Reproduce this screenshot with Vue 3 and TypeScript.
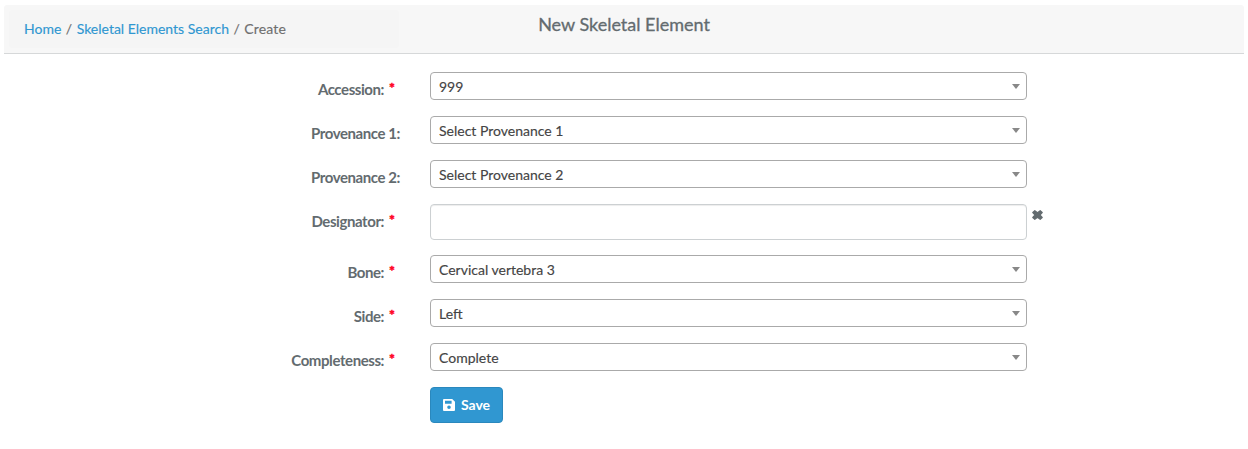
<script setup lang="ts">
import { ref } from 'vue'

interface Field {
  label: string
  value: string
  required: boolean
  kind: 'select' | 'text'
}

const fields = ref<Field[]>([
  { label: 'Accession:', value: '999', required: true, kind: 'select' },
  { label: 'Provenance 1:', value: 'Select Provenance 1', required: false, kind: 'select' },
  { label: 'Provenance 2:', value: 'Select Provenance 2', required: false, kind: 'select' },
  { label: 'Designator:', value: '', required: true, kind: 'text' },
  { label: 'Bone:', value: 'Cervical vertebra 3', required: true, kind: 'select' },
  { label: 'Side:', value: 'Left', required: true, kind: 'select' },
  { label: 'Completeness:', value: 'Complete', required: true, kind: 'select' },
])
</script>

<template>
  <main class="panel">
    <header class="heading">
      <nav class="crumbs">
        <a>Home</a><span class="sep">/</span><a>Skeletal Elements Search</a><span class="sep">/</span><span>Create</span>
      </nav>
      <h1 class="title">New Skeletal Element</h1>
    </header>
    <form class="form" @submit.prevent>
      <div v-for="f in fields" :key="f.label" class="row" :class="`row-${f.kind}`">
        <label class="label">
          <span>{{ f.label }}</span><span v-if="f.required" class="star">*</span>
        </label>
        <div v-if="f.kind === 'select'" class="select">
          <span>{{ f.value }}</span>
          <svg class="caret" width="8" height="5" viewBox="0 0 8 5"><path d="M0 0h8L4 5z" fill="#888" /></svg>
        </div>
        <template v-else>
          <input v-model="f.value" class="input" type="text" />
          <svg class="clear" width="11" height="10" viewBox="0 0 11 10">
            <path fill="#636b6f" stroke="#636b6f" stroke-width="1.2" stroke-linejoin="round" d="M2.8 .7 5.5 2.8 8.2 .7 10.2 2.5 7.9 5 10.2 7.5 8.2 9.3 5.5 7.2 2.8 9.3 .8 7.5 3.1 5 .8 2.5z" />
          </svg>
        </template>
      </div>
      <button class="save" type="submit">
        <svg width="12" height="12" viewBox="0 0 12 12">
          <path fill="#fff" fill-rule="evenodd" d="M1 0H9.2L12 2.8V11q0 1-1 1H1q-1 0-1-1V1Q0 0 1 0zM2 1.8V4.7H8.6V1.8zM6 6.5a1.8 1.8 0 1 0 0 3.6a1.8 1.8 0 1 0 0-3.6z" />
        </svg>
        <span>Save</span>
      </button>
    </form>
  </main>
</template>

<style>
body {
  margin: 0;
  background: #fff;
}
</style>

<style scoped>
* {
  box-sizing: border-box;
}
.panel {
  padding: 5px 4px 0;
  font: 14px/20px Lato, sans-serif;
  color: #636b6f;
}
.heading {
  height: 49px;
  display: grid;
  grid-template-columns: 390px 450px 1fr;
  padding: 5px;
  background: #f7f7f7;
  border-bottom: 1px solid #d6d8d9;
  border-radius: 3px 3px 0 0;
}
.crumbs {
  height: 38px;
  padding: 9px 15px;
  background: #f5f5f5;
  border-radius: 4px;
  color: #6f6f6f;
  white-space: nowrap;
  -webkit-text-stroke: 0.15px currentColor;
}
.crumbs a {
  color: #3097d1;
}
.sep {
  padding: 0 4.5px;
}
.crumbs span:last-child {
  letter-spacing: 0.15px;
}
.title {
  margin: 4px 0 0;
  text-align: center;
  font-size: 18px;
  line-height: 20px;
  font-weight: 400;
  white-space: nowrap;
  -webkit-text-stroke: 0.3px currentColor;
}
.form {
  padding-top: 18px;
}
.row {
  display: flex;
  height: 44px;
}
.row-text {
  height: 51px;
}
.label {
  width: 396px;
  margin-right: 30px;
  padding-top: 7px;
  text-align: right;
  font-size: 15px;
  font-weight: 700;
  letter-spacing: -0.42px;
  white-space: nowrap;
}
.star {
  display: inline-block;
  margin: 0 5px;
  font-size: 14px;
  letter-spacing: 0;
  line-height: 16px;
  color: #ff0020;
  transform: translateY(-2px);
  -webkit-text-stroke: 0.5px currentColor;
}
.select {
  width: 597px;
  height: 28px;
  display: flex;
  align-items: center;
  justify-content: space-between;
  padding: 1px 6px 0 8px;
  border: 1px solid #aaa;
  border-radius: 4px;
  color: #444;
  -webkit-text-stroke: 0.15px currentColor;
}
.caret {
  margin-top: -1px;
}
.input {
  width: 597px;
  height: 36px;
  padding: 6px 12px;
  border: 1px solid #ccd0d2;
  border-radius: 4px;
  box-shadow: inset 0 1px 1px rgba(0, 0, 0, 0.075);
  font: inherit;
  outline: 0;
}
.clear {
  margin: 6px 0 0 5px;
}
.save {
  width: 73px;
  height: 36px;
  margin-left: 426px;
  padding: 0;
  display: flex;
  align-items: center;
  justify-content: center;
  gap: 6px;
  border: 1px solid #2a88bd;
  border-radius: 4px;
  background: #3097d1;
  color: #fff;
  font: 700 14px/20px Lato, sans-serif;
}
</style>
